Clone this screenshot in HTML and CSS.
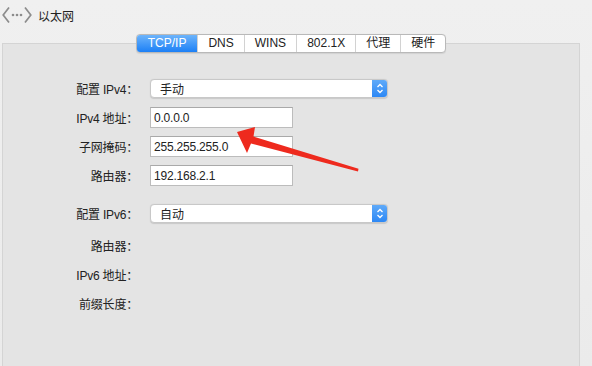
FILE: index.html
```html
<!DOCTYPE html>
<html lang="zh-CN">
<head>
<meta charset="utf-8">
<link rel="stylesheet" href="styles.css">
</head>
<body>
<header class="titlebar">
  <svg class="net-icon" width="30" height="16" viewBox="0 0 30 16">
    <polyline points="7,0.5 1.2,8 7,15.5" fill="none" stroke="#8c8c8c" stroke-width="1.7"/>
    <circle cx="11" cy="8" r="1.3" fill="#8c8c8c"/>
    <circle cx="15" cy="8" r="1.3" fill="#8c8c8c"/>
    <circle cx="19" cy="8" r="1.3" fill="#8c8c8c"/>
    <polyline points="23,0.5 28.8,8 23,15.5" fill="none" stroke="#8c8c8c" stroke-width="1.7"/>
  </svg>
  <span class="title">以太网</span>
</header>
<main class="pane">
  <nav class="tabs">
    <span class="tab active">TCP/IP</span>
    <span class="tab">DNS</span>
    <span class="tab">WINS</span>
    <span class="tab">802.1X</span>
    <span class="tab">代理</span>
    <span class="tab">硬件</span>
  </nav>
  <section class="box">
    <div class="row">
      <label class="lbl">配置 IPv4：</label>
      <div class="select"><span class="sel-text">手动</span><span class="stepper"><svg width="8" height="11" viewBox="0 0 8 11"><polyline points="1.5,4 4,1.5 6.5,4" fill="none" stroke="#fff" stroke-width="1.3"/><polyline points="1.5,7 4,9.5 6.5,7" fill="none" stroke="#fff" stroke-width="1.3"/></svg></span></div>
    </div>
    <div class="row">
      <label class="lbl">IPv4 地址：</label>
      <div class="input">0.0.0.0</div>
    </div>
    <div class="row">
      <label class="lbl">子网掩码：</label>
      <div class="input">255.255.255.0</div>
    </div>
    <div class="row">
      <label class="lbl">路由器：</label>
      <div class="input">192.168.2.1</div>
    </div>
    <div class="row v6">
      <label class="lbl">配置 IPv6：</label>
      <div class="select"><span class="sel-text">自动</span><span class="stepper"><svg width="8" height="11" viewBox="0 0 8 11"><polyline points="1.5,4 4,1.5 6.5,4" fill="none" stroke="#fff" stroke-width="1.3"/><polyline points="1.5,7 4,9.5 6.5,7" fill="none" stroke="#fff" stroke-width="1.3"/></svg></span></div>
    </div>
    <div class="row first-plain">
      <label class="lbl">路由器：</label>
    </div>
    <div class="row">
      <label class="lbl">IPv6 地址：</label>
    </div>
    <div class="row">
      <label class="lbl">前缀长度：</label>
    </div>
  </section>
</main>
<svg class="arrow" width="592" height="366" viewBox="0 0 592 366">
  <polygon points="237,132 255,127 253.5,136.5 358.5,168.8 358,171.6 251,143.5 247,153" fill="#ee2a1e"/>
</svg>
</body>
</html>
```

FILE: styles.css
```css
html, body {
  margin: 0;
  padding: 0;
}
body {
  width: 592px;
  height: 366px;
  overflow: hidden;
  background: linear-gradient(#f0f0f0, #ebebeb);
  font-family: "Liberation Sans", "Noto Sans CJK SC", sans-serif;
  font-size: 12px;
  color: #222;
  position: relative;
}
.titlebar {
  height: 30px;
  display: flex;
  align-items: center;
  gap: 6px;
  padding-left: 2px;
}
.net-icon {
  display: block;
}
.title {
  font-size: 12px;
  color: #222;
}
.pane {
  margin: 4px 12px 0 2px;
}
.tabs {
  position: relative;
  z-index: 1;
  display: flex;
  width: max-content;
  margin: 0 auto;
  height: 19px;
  border: 1px solid #b9b9b9;
  border-radius: 4px;
  background: #fff;
  box-sizing: border-box;
  overflow: hidden;
  box-shadow: 0 0.5px 1px rgba(0,0,0,0.08);
}
.tab {
  display: flex;
  align-items: center;
  padding: 0 10px;
  line-height: 17px;
  color: #222;
  border-left: 1px solid #d2d2d2;
}
.tab:first-child {
  border-left: none;
}
.tab.active {
  background: linear-gradient(#6db4fb, #1c80f6);
  color: #fff;
  padding: 0 11px;
}
.box {
  margin-top: -10px;
  height: 288px;
  background: #e4e4e4;
  border: 1px solid #d4d4d4;
  padding-top: 34px;
  display: flex;
  flex-direction: column;
  gap: 8px;
}
.row {
  display: grid;
  grid-template-columns: 135px auto;
  column-gap: 12px;
  align-items: center;
  height: 21px;
}
.row.v6 {
  margin-top: 9px;
}
.row.first-plain {
  margin-top: 3px;
}
.lbl {
  text-align: right;
  white-space: nowrap;
  letter-spacing: -0.2px;
}
.select {
  width: 238px;
  height: 19px;
  box-sizing: border-box;
  background: #fff;
  border: 1px solid #c8c8c8;
  border-radius: 4px;
  display: flex;
  align-items: center;
  justify-content: space-between;
  box-shadow: 0 0.5px 1px rgba(0,0,0,0.12);
  overflow: hidden;
}
.sel-text {
  padding-left: 9px;
}
.stepper {
  width: 16px;
  height: 19px;
  margin-right: -1px;
  background: linear-gradient(#62acf9, #2a86f5);
  border-radius: 0 4px 4px 0;
  display: flex;
  align-items: center;
  justify-content: center;
}
.stepper svg {
  display: block;
}
.input {
  width: 143px;
  height: 21px;
  box-sizing: border-box;
  background: #fff;
  border: 1px solid #bcbcbc;
  border-top-color: #a9a9a9;
  padding-left: 3px;
  display: flex;
  align-items: center;
  letter-spacing: -0.2px;
}
.arrow {
  position: absolute;
  left: 0;
  top: 0;
  pointer-events: none;
}
```
